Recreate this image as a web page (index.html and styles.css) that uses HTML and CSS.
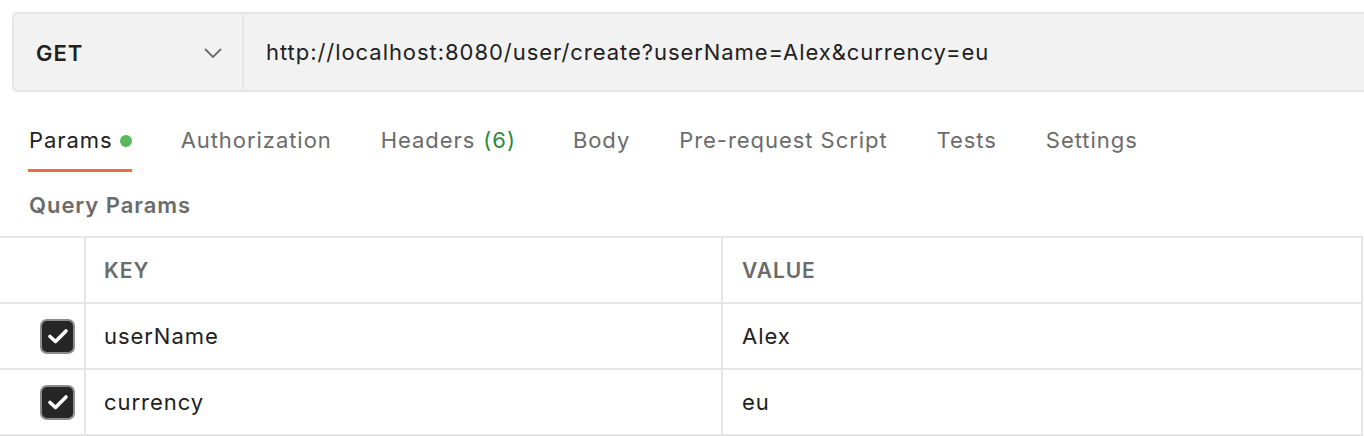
FILE: index.html
```html
<!DOCTYPE html>
<html>
<head>
<meta charset="utf-8">
<link rel="stylesheet" href="styles.css">
</head>
<body>
<div class="request-bar">
  <div class="method">
    <span class="method-name">GET</span>
    <svg class="chevron" width="18" height="10" viewBox="0 0 18 10"><path d="M1 1 L9 9 L17 1" fill="none" stroke="#6b6b6b" stroke-width="1.8"/></svg>
  </div>
  <div class="url">http://localhost:8080/user/create?userName=Alex&amp;currency=eu</div>
</div>
<div class="tabs">
  <div class="tab active">Params<span class="dot"></span></div>
  <div class="tab">Authorization</div>
  <div class="tab headers">Headers<span class="count">(6)</span></div>
  <div class="tab">Body</div>
  <div class="tab">Pre-request Script</div>
  <div class="tab">Tests</div>
  <div class="tab">Settings</div>
</div>
<div class="section-title">Query Params</div>
<div class="table">
  <div class="row head">
    <div class="cell check"></div>
    <div class="cell key">KEY</div>
    <div class="cell value">VALUE</div>
  </div>
  <div class="row">
    <div class="cell check"><span class="checkbox"><svg width="22" height="16" viewBox="0 0 22 16"><path d="M3 8.5 L8.5 13.5 L19 3" fill="none" stroke="#fff" stroke-width="3.6" stroke-linecap="round" stroke-linejoin="round"/></svg></span></div>
    <div class="cell key">userName</div>
    <div class="cell value">Alex</div>
  </div>
  <div class="row">
    <div class="cell check"><span class="checkbox"><svg width="22" height="16" viewBox="0 0 22 16"><path d="M3 8.5 L8.5 13.5 L19 3" fill="none" stroke="#fff" stroke-width="3.6" stroke-linecap="round" stroke-linejoin="round"/></svg></span></div>
    <div class="cell key">currency</div>
    <div class="cell value">eu</div>
  </div>
</div>
</body>
</html>
```
FILE: styles.css
```css
* { box-sizing: border-box; }
html, body { margin: 0; padding: 0; background: #fff; }
body {
  font-family: Inter, "Noto Sans", sans-serif;
  color: #212121;
  letter-spacing: 0.95px;
  width: 1364px;
  height: 436px;
  overflow: hidden;
}
.request-bar {
  margin: 12px 0 0 12px;
  height: 80px;
  display: flex;
  background: #f2f2f2;
  border: 2px solid #e6e6e6;
  border-right: none;
  border-radius: 5px 0 0 5px;
}
.method {
  width: 230px;
  flex: none;
  display: flex;
  align-items: center;
  padding-left: 22px;
  padding-right: 20px;
  border-right: 2px solid #e6e6e6;
}
.method-name {
  font-weight: 600;
  font-size: 22px;
  flex: 1;
  color: #212121;
  margin-top: 2px;
}
.chevron { margin-top: 1px; }
.url {
  display: flex;
  align-items: center;
  padding-left: 22px;
  font-size: 22px;
  color: #212121;
}
.tabs {
  display: flex;
  padding-left: 28px;
  margin-top: 27px;
  gap: 48px;
}
.tab {
  font-size: 22px;
  color: #6b6b6b;
  height: 53px;
  padding-top: 8px;
  padding-left: 1px;
  display: flex;
  align-items: flex-start;
  border-bottom: 3px solid transparent;
}
.tab.active {
  color: #212121;
  border-bottom-color: #f26b3a;
}
.tab.headers { margin-right: 8px; }
.dot {
  width: 12px;
  height: 12px;
  border-radius: 50%;
  background: #5cb85c;
  margin-left: 7px;
  margin-top: 8px;
}
.count { color: #2c8a38; margin-left: 8px; }
.section-title {
  font-weight: 600;
  font-size: 22px;
  color: #6b6b6b;
  padding-left: 29px;
  margin-top: 20px;
  height: 44px;
}
.table {
  width: 1363px;
  border-top: 2px solid #e6e6e6;
}
.row {
  display: flex;
  height: 66px;
  border-bottom: 2px solid #e6e6e6;
}
.cell {
  display: flex;
  align-items: center;
  font-size: 22px;
  color: #212121;
}
.check {
  width: 86px;
  flex: none;
  justify-content: flex-end;
  padding-right: 9px;
  border-right: 2px solid #e6e6e6;
}
.key {
  width: 637px;
  flex: none;
  padding-left: 18px;
  border-right: 2px solid #e6e6e6;
}
.value {
  flex: 1;
  padding-left: 19px;
  border-right: 2px solid #e6e6e6;
}
.head .cell {
  font-weight: 600;
  font-size: 21px;
  color: #6b6b6b;
}
.checkbox {
  width: 35px;
  height: 35px;
  border-radius: 7px;
  background: #262626;
  border: 2px solid #8c8c8c;
  display: flex;
  align-items: center;
  justify-content: center;
}
```
